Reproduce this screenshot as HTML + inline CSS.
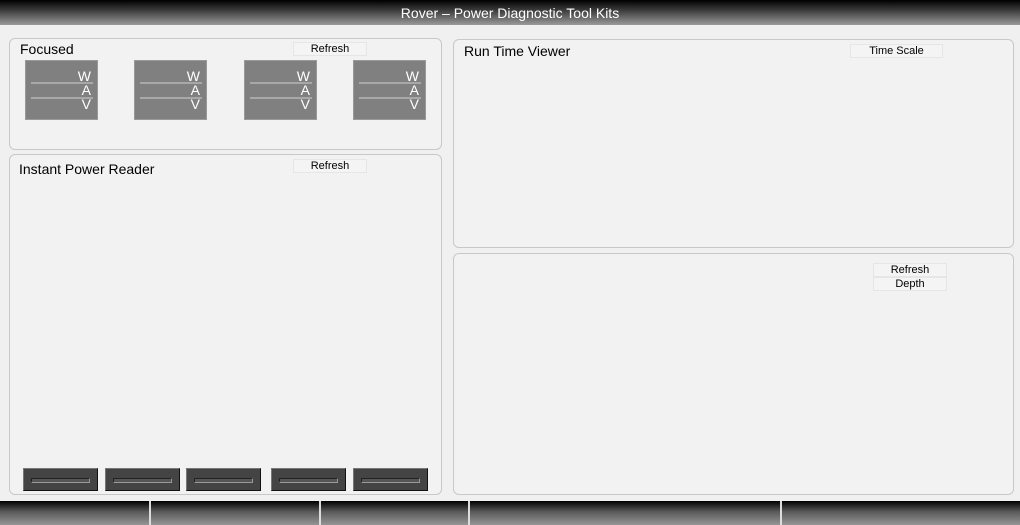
<!DOCTYPE html>
<html><head><meta charset="utf-8"><style>
*{margin:0;padding:0;box-sizing:border-box}
body{width:1020px;height:525px;background:#f0f0f0;position:relative;overflow:hidden;font-family:"Liberation Sans",sans-serif}
.a{position:absolute}
.top{left:0;top:0;width:1020px;height:25px;background:linear-gradient(#000,#3a3a3a 40%,#9a9a9a);color:#fff;font-size:14px;text-align:center;line-height:27px}
.p{position:absolute;border:1px solid #c8c8c8;border-radius:6px;background:#f2f2f2}
.t{position:absolute;font-size:14px;color:#000}
.btn{position:absolute;background:#f4f4f4;border:1px solid #e6e6e6;font-size:11px;text-align:center;line-height:12px;color:#000}
.g{position:absolute;top:60px;width:73px;height:60px;background:#808080;border:1px solid #999;color:#fff;font-size:14px}
.g span{position:absolute;right:6px}
.g i{position:absolute;left:5px;right:4px;height:2px;background:#a8a8a8}
.b{position:absolute;top:468px;width:75px;height:23px;background:#444;border:1px solid #777;border-right-color:#111;border-bottom-color:#111}
.b i{position:absolute;left:7px;right:7px;top:9px;height:5px;border:1px solid #222;border-bottom-color:#999;border-right-color:#999;background:#555}
.bot{top:501px;height:24px;background:linear-gradient(#000,#5a5a5a 45%,#959595);border-right:2px solid #ddd}
</style></head><body>
<div class="a top">Rover – Power Diagnostic Tool Kits</div>

<div class="p" style="left:9px;top:38px;width:433px;height:112px"></div>
<div class="t" style="left:20px;top:41px">Focused</div>
<div class="btn" style="left:293px;top:42px;width:74px">Refresh</div>

<div class="g" style="left:25px"><span style="top:7px">W</span><i style="top:21px"></i><span style="top:21px">A</span><i style="top:36px"></i><span style="top:35px">V</span></div>
<div class="g" style="left:134px"><span style="top:7px">W</span><i style="top:21px"></i><span style="top:21px">A</span><i style="top:36px"></i><span style="top:35px">V</span></div>
<div class="g" style="left:244px"><span style="top:7px">W</span><i style="top:21px"></i><span style="top:21px">A</span><i style="top:36px"></i><span style="top:35px">V</span></div>
<div class="g" style="left:353px"><span style="top:7px">W</span><i style="top:21px"></i><span style="top:21px">A</span><i style="top:36px"></i><span style="top:35px">V</span></div>

<div class="p" style="left:9px;top:154px;width:433px;height:341px"></div>
<div class="t" style="left:19px;top:161px">Instant Power Reader</div>
<div class="btn" style="left:293px;top:159px;width:74px">Refresh</div>
<div class="b" style="left:23px"><i></i></div>
<div class="b" style="left:105px"><i></i></div>
<div class="b" style="left:186px"><i></i></div>
<div class="b" style="left:271px"><i></i></div>
<div class="b" style="left:353px"><i></i></div>

<div class="p" style="left:453px;top:39px;width:561px;height:209px"></div>
<div class="t" style="left:464px;top:43px">Run Time Viewer</div>
<div class="btn" style="left:850px;top:44px;width:93px">Time Scale</div>

<div class="p" style="left:453px;top:253px;width:561px;height:242px"></div>
<div class="btn" style="left:873px;top:263px;width:74px">Refresh</div>
<div class="btn" style="left:873px;top:277px;width:74px">Depth</div>

<div class="a bot" style="left:0;width:151px"></div>
<div class="a bot" style="left:151px;width:170px"></div>
<div class="a bot" style="left:321px;width:149px"></div>
<div class="a bot" style="left:470px;width:312px"></div>
<div class="a bot" style="left:782px;width:238px;border-right:none"></div>
</body></html>
